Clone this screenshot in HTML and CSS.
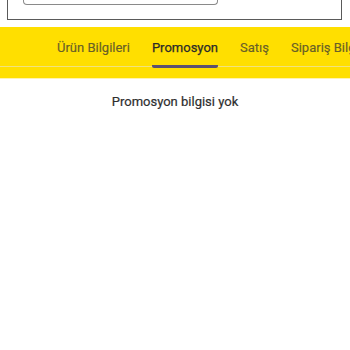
FILE: index.html
```html
<!DOCTYPE html>
<html lang="tr">
<head>
  <meta charset="UTF-8" />
  <meta name="viewport" content="width=device-width, initial-scale=1.0" />
  <title>Ürün Detayı</title>
  <link rel="stylesheet" href="styles.css">
</head>
<body>
  <div class="header">
    <div class="search-box"><div class="search-input"></div></div>
  </div>

  <div class="tabs">
    <div class="tab-row">
      <div class="tab">Ürün Bilgileri</div>
      <div class="tab active">Promosyon</div>
      <div class="tab">Satış</div>
      <div class="tab">Sipariş Bilgileri</div>
    </div>
  </div>

  <p class="empty">Promosyon bilgisi yok</p>
</body>
</html>
```

FILE: styles.css
```css
body { margin: 0; background: #fff; font-family: "Roboto", "Noto Sans", sans-serif; font-size: 13px; color: #2e2e2e; }
.header { padding: 0 8px 7px 7px; }
.search-box { height: 19px; border: 1px solid #5a5a5a; border-top: none; padding-left: 15px; }
.search-input { width: 193px; height: 4px; border: 1px solid #8a8a8a; border-top: none; border-radius: 0 0 4px 4px; }
.tabs { background: #ffdf00; padding-bottom: 11px; border-bottom: 1px solid #fff3b0; overflow: hidden; }
.tab-row { display: flex; gap: 22px; padding-left: 57px; white-space: nowrap; border-bottom: 1px solid #f1e27e; }
.tab { padding: 12px 0 8px; line-height: 18px; color: #686028; border-bottom: 3px solid transparent; margin-bottom: -2px; -webkit-text-stroke: 0.15px #686028; }
.tab.active { color: #2a2a2a; border-bottom-color: #5b5170; border-radius: 2px; -webkit-text-stroke: 0.25px #2a2a2a; }
.empty { margin: 0; padding-top: 14px; line-height: 18px; text-align: center; -webkit-text-stroke: 0.2px #2e2e2e; }
```
